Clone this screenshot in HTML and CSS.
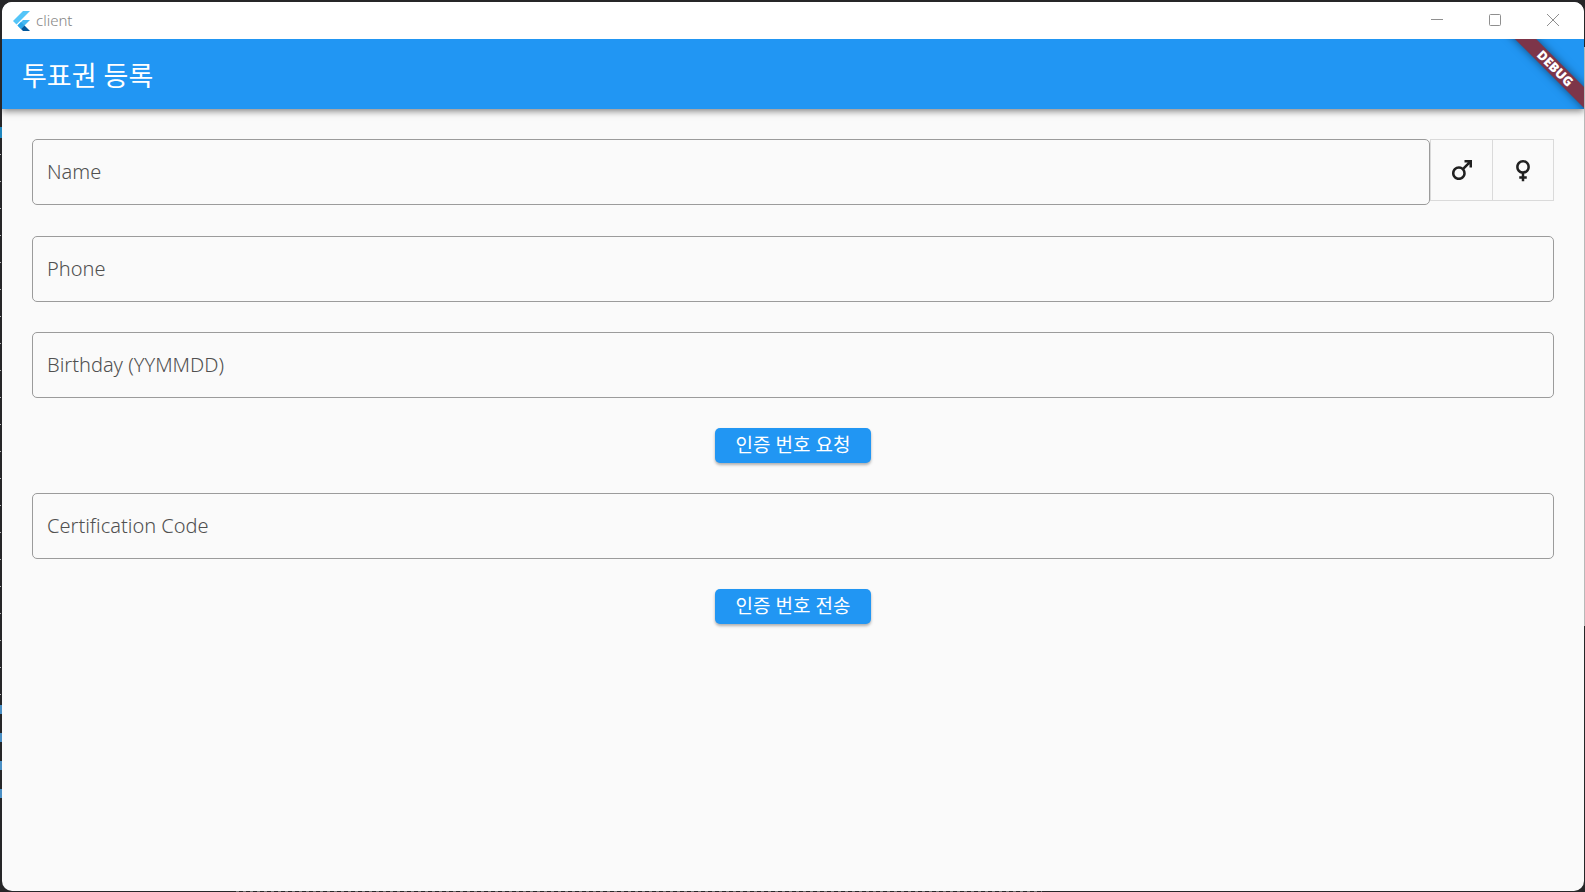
FILE: index.html
```html
<!DOCTYPE html>
<html lang="ko">
<head>
<meta charset="utf-8">
<meta name="viewport" content="width=device-width, initial-scale=1">
<title>client</title>
<link rel="stylesheet" href="styles.css">
</head>
<body>
<div class="window">
  <header class="titlebar">
    <svg class="logo" viewBox="0 0 17 20" aria-hidden="true">
      <path d="M10 0h7L3.500 13.500 0 10z" fill="#54c5f8"/>
      <path d="M10 9h7l-5.500 5.500L8 18 4.500 14.500z" fill="#45b9f3"/>
      <path d="M8 11l3.500 3.500L8 18l-3.500-3.500z" fill="#29a6ea"/>
      <path d="M8 18l3.500-3.500L17 20h-7z" fill="#01579b"/>
    </svg>
    <span class="caption">client</span>
    <div class="controls">
      <button class="control" type="button" aria-label="Minimize"><svg viewBox="0 0 12 12"><path d="M0 5.500h12"/></svg></button>
      <button class="control" type="button" aria-label="Maximize"><svg viewBox="0 0 12 12"><rect x=".5" y=".5" width="11" height="11" rx="1"/></svg></button>
      <button class="control" type="button" aria-label="Close"><svg viewBox="0 0 12 12"><path d="M0 0l12 12M12 0L0 12"/></svg></button>
    </div>
  </header>
  <div class="app">
    <div class="appbar"><h1 class="title">투표권 등록</h1></div>
    <div class="debug"><span class="ribbon">DEBUG</span></div>
    <form class="form">
      <div class="row">
        <input class="field" type="text" placeholder="Name" aria-label="Name">
        <div class="toggle" role="group" aria-label="Gender">
          <button class="option" type="button" aria-label="Male" aria-pressed="false">
            <svg viewBox="0 0 24 24"><path d="M9.500 11c1.930 0 3.500 1.570 3.500 3.500S11.430 18 9.500 18 6 16.430 6 14.500 7.570 11 9.500 11zm0-2C6.460 9 4 11.460 4 14.500S6.460 20 9.500 20s5.500-2.460 5.500-5.500c0-1.160-.360-2.230-.970-3.120L18 7.420V10h2V4h-6v2h2.580l-3.970 3.970C11.730 9.360 10.660 9 9.500 9z"/></svg>
          </button>
          <button class="option" type="button" aria-label="Female" aria-pressed="false">
            <svg viewBox="0 0 24 24"><path d="M17.500 9.500C17.500 6.460 15.040 4 12 4S6.500 6.460 6.500 9.500c0 2.700 1.940 4.930 4.500 5.400V17H9v2h2v2h2v-2h2v-2h-2v-2.100c2.560-.470 4.500-2.700 4.500-5.400zm-9 0C8.500 7.570 10.070 6 12 6s3.500 1.570 3.500 3.500S13.930 13 12 13s-3.500-1.570-3.500-3.500z"/></svg>
          </button>
        </div>
      </div>
      <input class="field" type="tel" placeholder="Phone" aria-label="Phone">
      <input class="field" type="text" placeholder="Birthday (YYMMDD)" aria-label="Birthday (YYMMDD)">
      <button class="submit" type="button">인증 번호 요청</button>
      <input class="field" type="text" placeholder="Certification Code" aria-label="Certification Code">
      <button class="submit" type="button">인증 번호 전송</button>
    </form>
  </div>
</div>
</body>
</html>
```
FILE: styles.css
```css
* {
  box-sizing: border-box;
}

/* The desktop behind the window shows as a thin edge on each side. */
body {
  margin: 0;
  min-height: 100vh;
  display: flex;
  padding: 2px 1px 1px 2px;
  background:
    linear-gradient(#b8b8b8, #b8b8b8) right 47px / 1px 579px no-repeat,
    linear-gradient(#1f86bd, #1f86bd) 0 127px / 2px 11px no-repeat,
    repeating-linear-gradient(#4a8fc4 0 9px, transparent 9px 28px) 0 705px / 2px 112px no-repeat,
    repeating-linear-gradient(transparent 0 26px, #b5b5b5 26px 27px) 0 128px / 1px 570px no-repeat,
    repeating-linear-gradient(90deg, #777 0 3px, transparent 3px 7px) 236px bottom / 806px 1px no-repeat,
    #262628;
  font-family: "Noto Sans", "Noto Sans CJK KR", sans-serif;
}

button,
input {
  font: inherit;
}

.window {
  flex: 1;
  display: flex;
  flex-direction: column;
  border-radius: 10px;
  overflow: hidden;
  background: #fafafa;
}

.titlebar {
  display: flex;
  align-items: center;
  height: 37px;
  padding: 0 2px 0 11px;
  background: #fff;
}

.logo {
  width: 17px;
  height: 20px;
}

.caption {
  margin-left: 6px;
  padding-bottom: 2px;
  color: #858585;
  font-size: 15px;
  font-weight: 300;
  line-height: 20px;
}

.controls {
  display: flex;
  margin-left: auto;
}

.control {
  display: flex;
  align-items: center;
  justify-content: center;
  width: 58px;
  height: 37px;
  padding: 0 0 2px;
  border: 0;
  background: none;
}

.control svg {
  width: 12px;
  height: 12px;
  overflow: visible;
  fill: none;
  stroke: #8f8f8f;
}

.app {
  position: relative;
  flex: 1;
  overflow: hidden;
}

.appbar {
  display: flex;
  align-items: center;
  height: 70px;
  padding: 4px 20px 0;
  background: #2196f3;
  box-shadow: 0 2px 7px rgba(0, 0, 0, 0.5);
}

.title {
  margin: 0;
  color: #fff;
  font-size: 27px;
  font-weight: 400;
  line-height: 36px;
}

.debug {
  position: absolute;
  top: 0;
  right: 0;
  width: 90px;
  height: 70px;
  overflow: hidden;
  pointer-events: none;
}

.ribbon {
  position: absolute;
  top: 22px;
  right: -41px;
  width: 140px;
  height: 15px;
  background: #7d3549;
  box-shadow: 0 0 8px rgba(0, 0, 0, 0.5);
  color: #fff;
  font-size: 13px;
  font-weight: 900;
  line-height: 15px;
  text-align: center;
  transform: rotate(45deg);
}

.form {
  display: flex;
  flex-direction: column;
  align-items: center;
  gap: 30px;
  padding: 30px;
}

.row {
  display: flex;
  align-items: flex-start;
  width: 100%;
  padding-bottom: 1px;
}

.field {
  width: 100%;
  min-width: 0;
  height: 66px;
  padding: 0 14px 2px;
  border: 1px solid #9b9b9b;
  border-radius: 5px;
  background: transparent;
  color: #212121;
  font-size: 20px;
}

.row .field {
  flex: 1;
}

.field::placeholder {
  color: #505050;
  font-weight: 300;
  opacity: 1;
}

.toggle {
  display: flex;
  border: 1px solid #dadada;
}

.option {
  display: flex;
  align-items: center;
  justify-content: center;
  width: 61px;
  height: 60px;
  padding: 0;
  border: 0;
  background: none;
}

.option + .option {
  border-left: 1px solid #dadada;
}

.option svg {
  width: 30px;
  height: 30px;
  fill: #212121;
}

.submit {
  height: 35px;
  padding: 0 21px;
  border: 0;
  border-radius: 5px;
  background: #2196f3;
  box-shadow: 0 2px 3px rgba(0, 0, 0, 0.3);
  color: #fff;
  font-size: 19px;
  line-height: 35px;
}
```
